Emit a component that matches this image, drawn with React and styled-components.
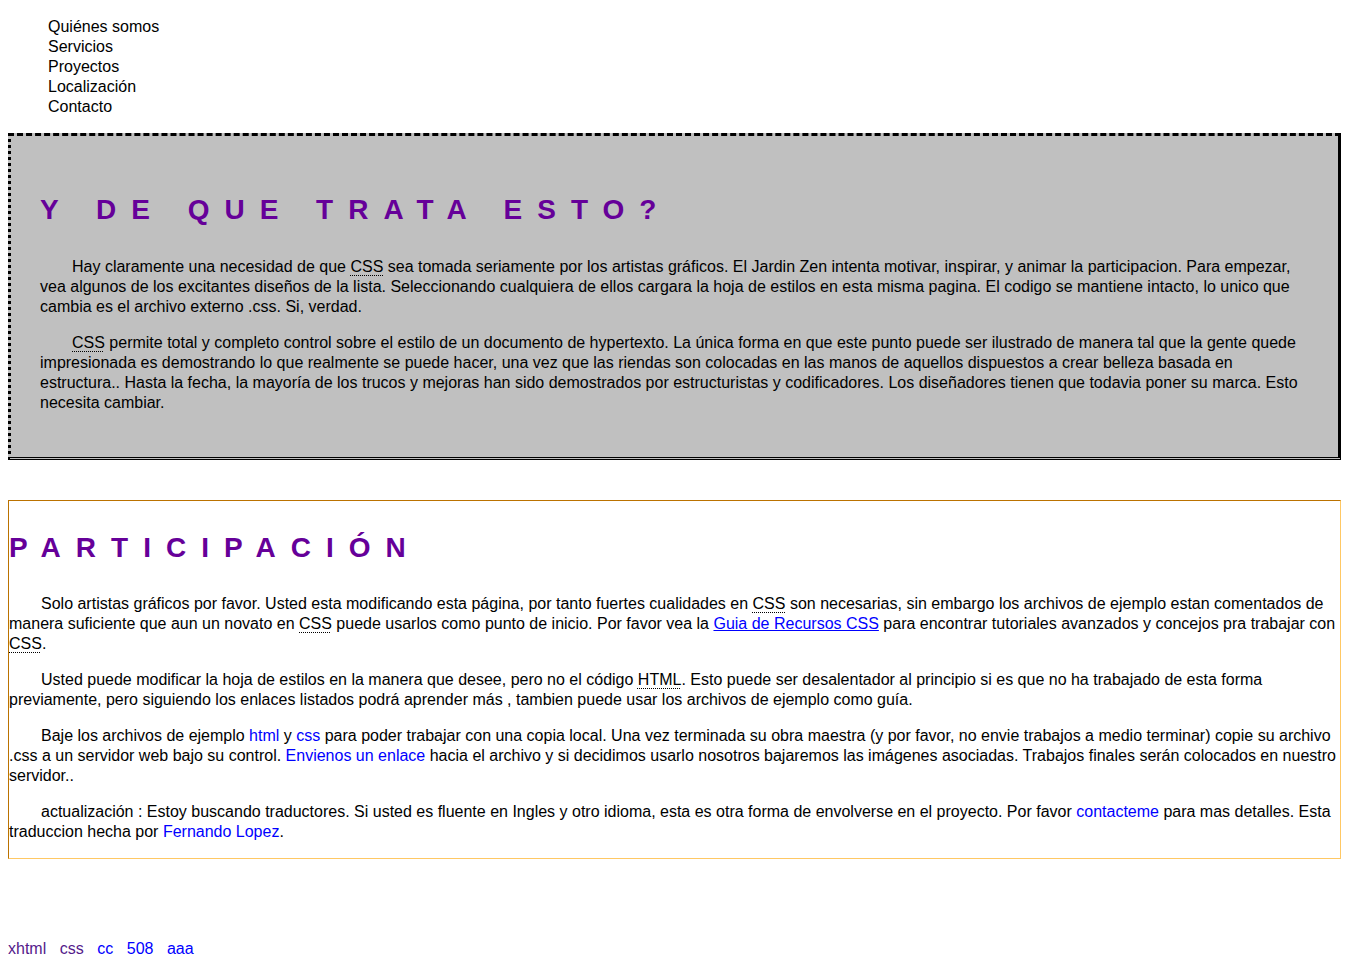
import React from 'react'
import styled, { createGlobalStyle } from 'styled-components'

const GlobalStyle = createGlobalStyle`
  body {
    margin: 8px;
    background: #fff;
    color: #000;
    font-family: "Liberation Sans", Arial, sans-serif;
    font-size: 16px;
    line-height: 20px;
  }
`

const Nav = styled.ul`
  list-style: none;
  margin: 9px 0 16px;
  padding-left: 40px;
`

const NavItem = styled.li`
  color: #000;
`

const Section = styled.div`
  margin-bottom: ${props => props.$gap || 0}px;
  ${props =>
    props.$grey
      ? `
    background: #c0c0c0;
    border-top: 3px dashed #000;
    border-left: 3px dotted #000;
    border-right: 3px solid #000;
    border-bottom: 3px double #000;
    padding: 29px 29px 28px;
  `
      : `
    border: 1px solid;
    border-color: #bb7200 #ffc864 #ffc864 #bb7200;
    padding: 0;
  `}
`

const Heading = styled.h3`
  margin: ${props => (props.$low ? '31px 0 30px' : '29px 0 31px')};
  font-size: 28px;
  line-height: 32px;
  font-weight: bold;
  letter-spacing: 15px;
  color: #660099;
`

const Para = styled.p`
  margin: 16px 0;
  text-indent: 32px;
`

const Abbr = styled.abbr`
  text-decoration: underline dotted #000;
  text-decoration-thickness: 1px;
  text-underline-offset: 3px;
`

const Link = styled.a`
  color: ${props => (props.$visited ? '#551a8b' : '#0000ff')};
  text-decoration: ${props => (props.$underline ? 'underline' : 'none')};
`

const Footer = styled.div`
  margin-top: 80px;
  display: flex;
  gap: 13.5px;
`

const navItems = ['Quiénes somos', 'Servicios', 'Proyectos', 'Localización', 'Contacto']

const footerLinks = [
  { label: 'xhtml', visited: true },
  { label: 'css', visited: true },
  { label: 'cc' },
  { label: '508' },
  { label: 'aaa' },
]

const CSS = () => <Abbr title="Cascading Style Sheets">CSS</Abbr>

export default function App() {
  return (
    <>
      <GlobalStyle />
      <Nav>
        {navItems.map(item => (
          <NavItem key={item}>{item}</NavItem>
        ))}
      </Nav>

      <Section $grey $gap={40}>
        <Heading>Y DE QUE TRATA ESTO?</Heading>
        <Para>
          Hay claramente una necesidad de que <CSS /> sea tomada seriamente por los
          artistas gráficos. El Jardin Zen intenta motivar, inspirar, y animar la
          participacion. Para empezar, vea algunos de los excitantes diseños de la
          lista. Seleccionando cualquiera de ellos cargara la hoja de estilos en esta
          misma pagina. El codigo se mantiene intacto, lo unico que cambia es el
          archivo externo .css. Si, verdad.
        </Para>
        <Para>
          <CSS /> permite total y completo control sobre el estilo de un documento de
          hypertexto. La única forma en que este punto puede ser ilustrado de manera
          tal que la gente quede impresionada es demostrando lo que realmente se puede
          hacer, una vez que las riendas son colocadas en las manos de aquellos
          dispuestos a crear belleza basada en estructura.. Hasta la fecha, la mayoría
          de los trucos y mejoras han sido demostrados por estructuristas y
          codificadores. Los diseñadores tienen que todavia poner su marca. Esto
          necesita cambiar.
        </Para>
      </Section>

      <Section>
        <Heading $low>PARTICIPACIÓN</Heading>
        <Para>
          Solo artistas gráficos por favor. Usted esta modificando esta página, por
          tanto fuertes cualidades en <CSS /> son necesarias, sin embargo los archivos
          de ejemplo estan comentados de manera suficiente que aun un novato en{' '}
          <CSS /> puede usarlos como punto de inicio. Por favor vea la{' '}
          <Link href="#" $underline>
            Guia de Recursos CSS
          </Link>{' '}
          para encontrar tutoriales avanzados y concejos pra trabajar con <CSS />.
        </Para>
        <Para>
          Usted puede modificar la hoja de estilos en la manera que desee, pero no el
          código <Abbr title="HyperText Markup Language">HTML</Abbr>. Esto puede ser
          desalentador al principio si es que no ha trabajado de esta forma
          previamente, pero siguiendo los enlaces listados podrá aprender más ,
          tambien puede usar los archivos de ejemplo como guía.
        </Para>
        <Para>
          Baje los archivos de ejemplo <Link href="#">html</Link> y{' '}
          <Link href="#">css</Link> para poder trabajar con una copia local. Una vez
          terminada su obra maestra (y por favor, no envie trabajos a medio terminar)
          copie su archivo .css a un servidor web bajo su control.{' '}
          <Link href="#">Envienos un enlace</Link> hacia el archivo y si decidimos
          usarlo nosotros bajaremos las imágenes asociadas. Trabajos finales serán
          colocados en nuestro servidor..
        </Para>
        <Para>
          actualización : Estoy buscando traductores. Si usted es fluente en Ingles y
          otro idioma, esta es otra forma de envolverse en el proyecto. Por favor{' '}
          <Link href="#">contacteme</Link> para mas detalles. Esta traduccion hecha
          por <Link href="#">Fernando Lopez</Link>.
        </Para>
      </Section>

      <Footer>
        {footerLinks.map(({ label, visited }) => (
          <Link key={label} href="#" $visited={visited}>
            {label}
          </Link>
        ))}
      </Footer>
    </>
  )
}
